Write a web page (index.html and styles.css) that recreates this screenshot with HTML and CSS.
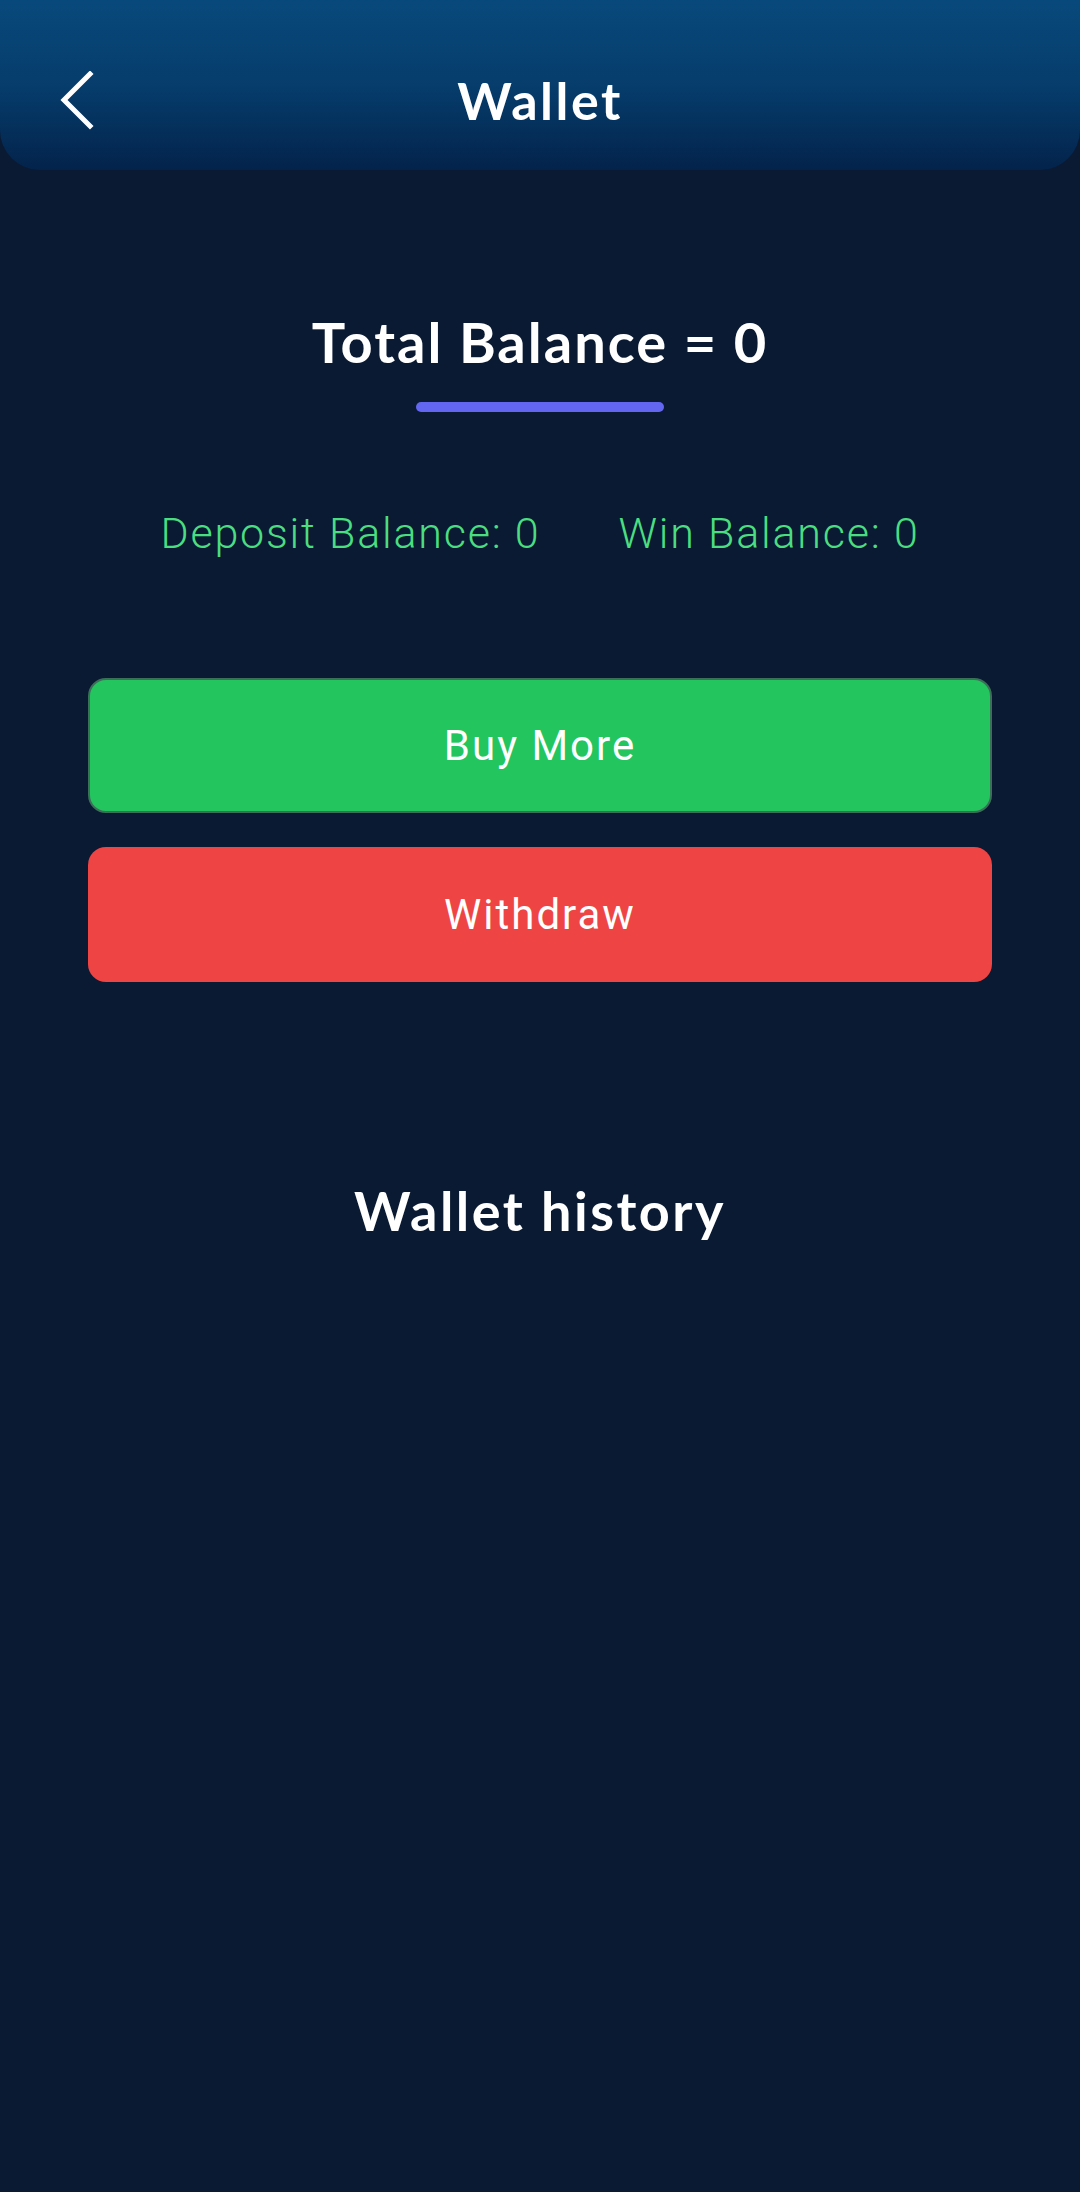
FILE: index.html
```html
<!DOCTYPE html>
<html lang="en">
<head>
  <meta charset="UTF-8">
  <meta name="viewport" content="width=device-width, initial-scale=1.0">
  <title>Wallet</title>
  <link rel="stylesheet" href="styles.css">
</head>
<body>
  <div class="header">
    <button class="back-btn" aria-label="Back">
      <svg width="40" height="60" viewBox="0 0 40 60">
        <polyline points="30,3 4,29 30,55" fill="none" stroke="#fff" stroke-width="5" stroke-linecap="square" stroke-linejoin="miter"/>
      </svg>
    </button>
    <h1>Wallet</h1>
  </div>

  <div class="content">
    <div class="total">
      <h2>Total Balance = 0</h2>
      <div class="underline"></div>
    </div>

    <div class="balances">
      <span>Deposit Balance: 0</span>
      <span>Win Balance: 0</span>
    </div>

    <div class="actions">
      <button class="btn btn-buy">Buy More</button>
      <button class="btn btn-withdraw">Withdraw</button>
    </div>

    <h3 class="history-title">Wallet history</h3>
  </div>
</body>
</html>
```

FILE: styles.css
```css
body {
  margin: 0;
  padding: 0;
  min-height: 100vh;
  background-color: #0a1a33;
  font-family: "Lato", "Roboto", sans-serif;
  color: #fff;
}
.header {
  position: relative;
  height: 170px;
  display: flex;
  align-items: center;
  justify-content: center;
  padding-top: 30px;
  box-sizing: border-box;
  background: linear-gradient(180deg, #08497b 0%, #063d6c 50%, #03234b 100%);
  border-radius: 0 0 40px 40px;
}
.header h1 {
  margin: 0;
  font-size: 52px;
  font-weight: 700;
  line-height: 60px;
  letter-spacing: 2.5px;
}
.back-btn {
  position: absolute;
  left: 60px;
  top: 71px;
  padding: 0;
  border: none;
  background: none;
  cursor: pointer;
}
.content {
  display: flex;
  flex-direction: column;
  align-items: center;
}
.total {
  margin-top: 140px;
  display: flex;
  flex-direction: column;
  align-items: center;
}
.total h2 {
  margin: 0;
  font-size: 56px;
  font-weight: 700;
  line-height: 64px;
  letter-spacing: 2px;
}
.underline {
  width: 248px;
  height: 10px;
  margin-top: 28px;
  border-radius: 5px;
  background: #6366f1;
}
.balances {
  margin-top: 96px;
  display: flex;
  gap: 78px;
  font-family: "Roboto", sans-serif;
  font-weight: 300;
  font-size: 43px;
  line-height: 50px;
  letter-spacing: 1.8px;
  color: #4ade80;
}
.actions {
  margin-top: 120px;
  width: 904px;
  display: flex;
  flex-direction: column;
  gap: 34px;
}
.btn {
  width: 100%;
  height: 135px;
  border: none;
  border-radius: 18px;
  font-family: "Roboto", sans-serif;
  font-size: 42px;
  letter-spacing: 2px;
  color: #fff;
  cursor: pointer;
}
.btn-buy {
  background: #22c55e;
  border: 2px solid #3b6f58;
}
.btn-withdraw {
  background: #ef4444;
}
.history-title {
  margin: 198px 0 0;
  font-size: 54px;
  font-weight: 700;
  line-height: 62px;
  letter-spacing: 2.5px;
}
```
